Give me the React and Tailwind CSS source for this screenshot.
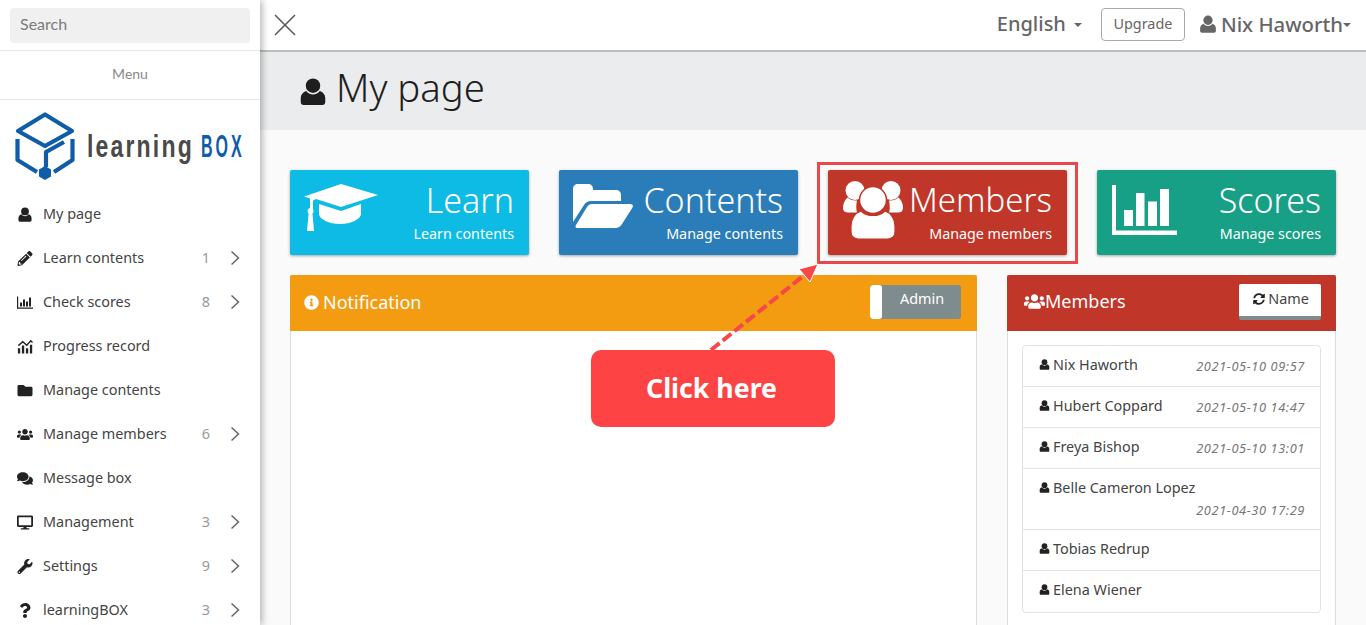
import React from "react";
import { FaPencilAlt, FaFolder, FaUsers, FaComments, FaDesktop, FaWrench, FaQuestion, FaInfoCircle, FaSyncAlt } from "react-icons/fa";

const F = "[font-family:'Noto_Sans','Liberation_Sans',sans-serif]";

function User({ className }) {
  return (
    <svg viewBox="0 0 24 24" className={className} fill="currentColor">
      <circle cx="12" cy="7" r="6.2" />
      <path d="M6.2 11.6c1.3 2 3.4 3 5.8 3s4.5-1 5.8-3c2.8 1 4.7 3 4.7 6v3.6c0 1.4-1 2.3-2.4 2.3H3.900c-1.400 0-2.400-.9-2.400-2.300v-3.600c0-3 1.900-5 4.700-6z" />
    </svg>
  );
}
function MiniBars({ className }) {
  return (
    <svg viewBox="0 0 16 14" className={className} fill="currentColor">
      <path d="M0 1h1.200v11H16v1.300H0z" />
      <path d="M3 7h2v4H3zM6 4h2v7H6zM9 6h2v5H9zM12 2h2v9h-2z" />
    </svg>
  );
}
function Progress({ className }) {
  return (
    <svg viewBox="0 0 18 16" className={className} fill="currentColor">
      <path d="M1 10h2.600v6H1zM5.500 7h2.600v9H5.500zM10 10h2.600v6H10zM14.500 6h2.600v10h-2.600z" />
      <path d="M1.500 7 6.500 2.500l4.500 4L15.500 1.500l2 2" fill="none" stroke="currentColor" strokeWidth="1.600" />
    </svg>
  );
}
function Cap({ className }) {
  return (
    <svg viewBox="0 0 74 50" className={className} fill="white">
      <path d="M37 1 74 12 37 24 12 16 9 17.500V26H6V15.500L0 13.500z" />
      <path d="M15 21 37 28 57 21V31C57 36 47 41 36 41S15 36 15 31z" />
      <path d="M6.500 25c2 0 3 1.500 3 3s-.6 2-1 2.500L10 48H3L4.600 30.500c-.6-.6-1-1.300-1-2.500 0-1.500 1-3 2.900-3z" />
    </svg>
  );
}
function FolderOpen({ className }) {
  return (
    <svg viewBox="0 0 60 46" className={className} fill="white">
      <path d="M0 6c0-3 2-5 5-5h10c3 0 5 2 5 5v1h23c3 0 5 2 5 5v6H18c-3 0-5 1-7 4L0 39z" />
      <path d="M14 24c1-2 3-3 5-3h38c2.500 0 3.500 1.500 2.500 3.500L49 41c-1.500 2.500-4 4-6.500 4H5c-2.500 0-3-1.500-2-3z" />
    </svg>
  );
}
function BigUsers({ className }) {
  return (
    <svg viewBox="0 0 60 60" className={className}>
      <g fill="white">
        <circle cx="12" cy="10.500" r="9.500" />
        <circle cx="48" cy="10.500" r="9.500" />
        <path d="M4.500 17.500C1.500 20 0 24 0 28c0 3 2 4.500 5 4.500h9c-1-3-1-8 0-12-4 .5-7-1-9.500-3z" />
        <path d="M55.500 17.500C58.500 20 60 24 60 28c0 3-2 4.500-5 4.500h-9c1-3 1-8 0-12 4 .5 7-1 9.500-3z" />
        <path d="M18 31c3 3 7 4.500 12 4.500S39 34 42 31c6 2 10 8 10 15v6c0 4-3 7-7 7H15c-4 0-7-3-7-7v-6c0-7 4-13 10-15z" stroke="#c03629" strokeWidth="1.200" />
        <circle cx="30" cy="20" r="13.500" stroke="#c03629" strokeWidth="1.500" />
      </g>
    </svg>
  );
}
function Bars({ className }) {
  return (
    <svg viewBox="0 0 66 50" className={className} fill="white">
      <path d="M0 0h4v45.500h61V50H0z" />
      <path d="M12 25h9v16h-9zM24 8h8.500v33H24zM36 16.500h9V41h-9zM48 4h9v37h-9z" />
    </svg>
  );
}
function Logo() {
  return (
    <svg viewBox="0 0 240 70" className="ml-[10px] h-[70px] w-[240px]">
      <g fill="none" stroke="#0f5ca8" strokeWidth="4.200" strokeLinejoin="round">
        <path d="M35 3.500 62 20 35 35 8 20z" />
        <path d="M7.500 28V49L27 61" />
        <path d="M62.500 28V49L44 61" />
        <path d="M54 31 36 41V56" />
      </g>
      <path d="M35 55l6 3.500v7L35 69l-6-3.500v-7z" fill="#0f5ca8" />
      <g transform="translate(77 46) scale(0.72 1)">
        <text x="0" y="0" fontFamily="'Liberation Sans',sans-serif" fontWeight="700" fontSize="32" letterSpacing="3" fill="#4a4a4a">learning</text>
      </g>
      <g transform="translate(191 46) scale(0.5 1)">
        <text x="0" y="0" fontFamily="'Liberation Sans',sans-serif" fontWeight="700" fontSize="32" letterSpacing="6" fill="#0f5ca8">BOX</text>
      </g>
    </svg>
  );
}

const menu = [
  [User, "My page"],
  [FaPencilAlt, "Learn contents", 1],
  [MiniBars, "Check scores", 8],
  [Progress, "Progress record"],
  [FaFolder, "Manage contents"],
  [FaUsers, "Manage members", 6],
  [FaComments, "Message box"],
  [FaDesktop, "Management", 3],
  [FaWrench, "Settings", 9],
  [FaQuestion, "learningBOX", 3],
];

function Chevron() {
  return (
    <svg viewBox="0 0 10 16" className="ml-[20px] h-[16px] w-[10px]" fill="none" stroke="#666" strokeWidth="1.500">
      <path d="M1.500 1.500 8.500 8l-7 6.500" />
    </svg>
  );
}

const cards = [
  ["Learn", "Learn contents", "bg-[#0dbbe5]", "text-[34px]", <Cap key="c" className="ml-[14px] mt-[13px] h-[50px] w-[74px]" />],
  ["Contents", "Manage contents", "bg-[#2a7db8]", "text-[34px]", <FolderOpen key="f" className="ml-[14px] mt-[13px] h-[46px] w-[60px]" />],
  ["Members", "Manage members", "bg-[#c03629]", "text-[33px]", <BigUsers key="u" className="ml-[15px] mt-[10px] h-[60px] w-[60px]" />],
  ["Scores", "Manage scores", "bg-[#17a085]", "text-[34px]", <Bars key="b" className="ml-[15px] mt-[15px] h-[50px] w-[66px]" />],
];

const people = [
  ["Nix Haworth", "2021-05-10 09:57"],
  ["Hubert Coppard", "2021-05-10 14:47"],
  ["Freya Bishop", "2021-05-10 13:01"],
  ["Belle Cameron Lopez", "2021-04-30 17:29", true],
  ["Tobias Redrup"],
  ["Elena Wiener"],
];

export default function App() {
  return (
    <div className={`relative flex h-[625px] w-[1366px] overflow-hidden bg-[#fafafa] ${F}`}>
      <aside className="relative z-10 flex h-full w-[260px] shrink-0 flex-col overflow-hidden bg-white shadow-[2px_0_7px_rgba(0,0,0,0.3)]">
        <div className="h-[51px] shrink-0 border-b border-[#e5e5e5] px-[10px] pt-[8px]">
          <div className="flex h-[35px] items-center rounded bg-[#f0f0f0] px-[10px] pb-[3px] text-[16px] text-[#7b7b7b] [font-family:Lato,sans-serif]">Search</div>
        </div>
        <div className="flex h-[49px] shrink-0 items-center justify-center border-b border-[#e5e5e5] pb-[3px] text-[14px] text-[#8a8a8a] [font-family:Lato,sans-serif]">Menu</div>
        <div className="h-[92px] shrink-0 pt-[11px]"><Logo /></div>
        <ul className="flex shrink-0 flex-col">
          {menu.map(([Icon, label, n]) => (
            <li key={label} className="flex h-[44px] shrink-0 items-center pl-[17px] pr-[20px] text-[#444]">
              <span className="flex w-[26px] shrink-0 text-[#222]"><Icon className="h-[15px] w-[16px]" /></span>
              <span className="flex-1 text-[14.400px]">{label}</span>
              {n && <span className="text-[14.400px] text-[#999]">{n}</span>}
              {n && <Chevron />}
            </li>
          ))}
        </ul>
      </aside>

      <main className="flex min-w-0 flex-1 flex-col">
        <header className="flex h-[52px] shrink-0 items-center border-b-2 border-[#bdbdbd] bg-white pl-[14px] pr-[15px] text-[#666]">
          <svg viewBox="0 0 22 22" className="h-[22px] w-[22px]" fill="none" stroke="#555" strokeWidth="1.500"><path d="M1 1l20 20M21 1 1 21" /></svg>
          <span className="mb-[2px] ml-auto text-[20px] font-medium">English</span>
          <span className="ml-[8px] border-x-[4px] border-t-[4px] border-x-transparent border-t-[#666]" />
          <span className="mb-[2px] ml-[19px] flex h-[33px] w-[84px] items-center justify-center rounded border border-[#aaa] text-[14.400px]">Upgrade</span>
          <User className="mb-[2px] ml-[14px] h-[18px] w-[18px]" />
          <span className="mb-[2px] ml-[4px] text-[20.300px] font-medium">Nix Haworth</span>
          <span className="border-x-[4px] border-t-[4px] border-x-transparent border-t-[#666]" />
        </header>
        <div className="flex h-[78px] shrink-0 items-center bg-[#ebeced] pl-[39px] text-[#1e1e1e]">
          <User className="h-[31px] w-[28px]" />
          <h1 className="mb-[7px] ml-[9px] text-[38.300px] font-light">My page</h1>
        </div>
        <div className="flex min-h-0 flex-1 flex-col overflow-hidden px-[30px] pt-[40px]">
          <div className="grid shrink-0 grid-cols-4 gap-[30px]">
            {cards.map(([t, s, c, size, icon]) => (
              <div key={t} className={`flex h-[85px] justify-between rounded-[2px] text-white shadow-[0_1px_3px_rgba(0,0,0,0.35)] ${c}`}>
                {icon}
                <div className="flex flex-col items-end pr-[15px] pt-[6px]">
                  <span className={`${size} font-light leading-[48px]`}>{t}</span>
                  <span className="text-[14.300px] leading-[20px]">{s}</span>
                </div>
              </div>
            ))}
          </div>
          <div className="mt-[20px] flex min-h-0 flex-1 gap-[30px]">
            <section className="h-[400px] w-[687px] shrink-0 border-x border-[#ddd] bg-white">
              <div className="-mx-px flex h-[56px] items-center justify-between rounded-t-[2px] bg-[#f39c12] pl-[14px] pr-[16px] text-white">
                <span className="mb-[2px] flex items-center text-[18px]"><FaInfoCircle className="mr-[4px] h-[15px] w-[15px]" />Notification</span>
                <span className="mb-[3px] flex h-[34px] w-[91px] overflow-hidden rounded-[3px] bg-[#7f8c8d]">
                  <span className="h-full w-[12px] rounded-[3px] bg-white" />
                  <span className="flex-1 pb-[4px] pl-[1px] text-center text-[14.400px] leading-[28px]">Admin</span>
                </span>
              </div>
            </section>
            <section className="h-[400px] flex-1 border-x border-[#ddd] bg-white">
              <div className="-mx-px flex h-[56px] items-center justify-between rounded-t-[2px] bg-[#c03629] pl-[17px] pr-[15px] text-white">
                <span className="mb-[4px] flex items-center text-[18px]"><FaUsers className="h-[17px] w-[21px]" />Members</span>
                <span className="mb-[3px] flex h-[36px] w-[82px] items-center justify-center gap-[3px] rounded-[2px] border-b-[4px] border-[#7f8c8d] bg-white pb-[2px] pl-[2px] text-[14.400px] text-[#444]">
                  <FaSyncAlt className="h-[12px] w-[12px] text-[#222]" />Name
                </span>
              </div>
              <ul className="mx-[14px] mt-[14px] rounded border border-[#e3e3e3]">
                {people.map(([n, d, wrap]) => (
                  <li key={n} className={`flex border-b border-[#e3e3e3] pl-[16px] pr-[15px] pt-[8px] last:border-b-0 ${wrap ? "h-[61px] flex-col" : "h-[41px] justify-between"}`}>
                    <span className="flex h-[21px] items-center text-[14.400px] text-[#444]"><User className="mr-[3px] h-[11px] w-[11px] text-[#222]" />{n}</span>
                    {d && <span className={`text-[12.800px] italic leading-[24px] tracking-[0.6px] text-[#777] ${wrap ? "self-end" : ""}`}>{d}</span>}
                  </li>
                ))}
              </ul>
            </section>
          </div>
        </div>
      </main>

      <div className="absolute left-[817px] top-[162px] z-20 h-[102px] w-[261px] border-[3px] border-[#e9474b]" />
      <svg className="absolute left-[700px] top-[255px] z-20 h-[100px] w-[130px]" viewBox="0 0 130 100" fill="none">
        <path d="M11 95 102 22" stroke="#f84749" strokeWidth="4" strokeDasharray="11 4" />
        <path d="M118 9 110 27 99 14z" fill="#f84749" stroke="white" strokeWidth="1" />
      </svg>
      <div className="absolute left-[591px] top-[350px] z-20 flex h-[77px] w-[244px] items-center justify-center rounded-[10px] bg-[#fe4345] pr-[3px] text-[26.700px] font-bold text-white">Click here</div>
    </div>
  );
}
